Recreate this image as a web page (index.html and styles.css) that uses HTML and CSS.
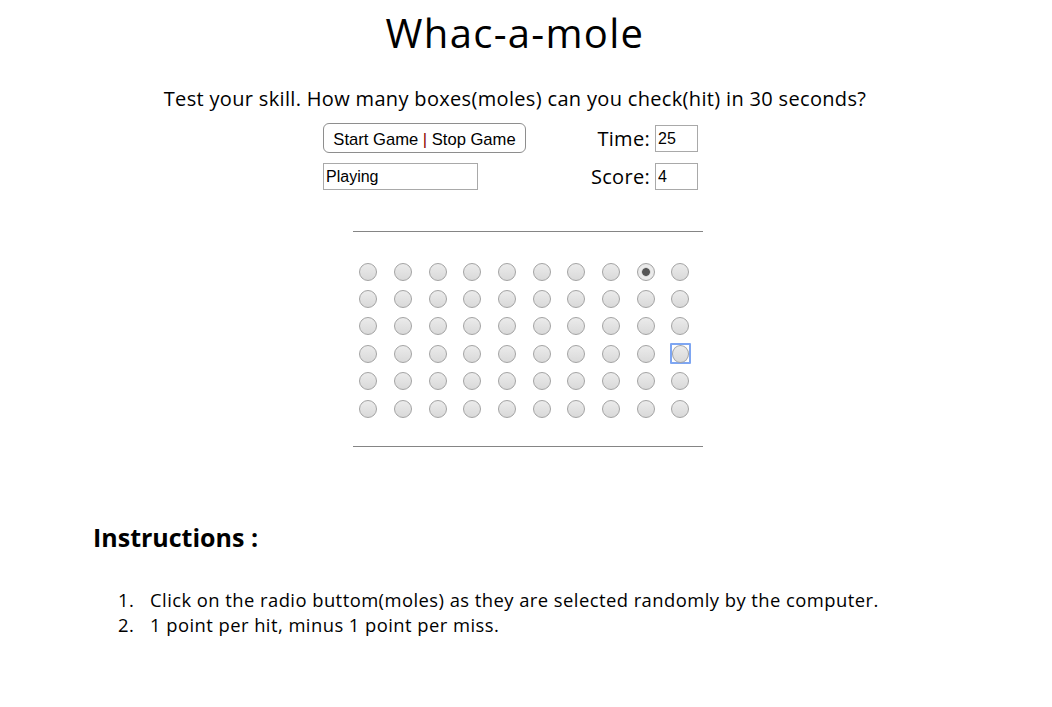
FILE: index.html
```html
<!DOCTYPE html>
<html>
<head>
<meta charset="utf-8">
<title>Whac-a-mole</title>
<link rel="stylesheet" href="styles.css">
</head>
<body>
<div class="page">
  <h1 class="title">Whac-a-mole</h1>
  <p class="lead">Test your skill. How many boxes(moles) can you check(hit) in 30 seconds?</p>
  <div class="controls">
    <button class="btn">Start Game <span class="sep">|</span> Stop Game</button>
    <div class="field time"><span class="label">Time:</span><input class="small" type="text" value="25"></div>
    <input class="status" type="text" value="Playing">
    <div class="field"><span class="label">Score:</span><input class="small" type="text" value="4"></div>
  </div>
  <div class="board">
    <div class="grid" id="grid"></div>
  </div>
  <h2 class="instr">Instructions :</h2>
  <ol class="steps">
    <li>Click on the radio buttom(moles) as they are selected randomly by the computer.</li>
    <li>1 point per hit, minus 1 point per miss.</li>
  </ol>
</div>
<script>
  var g = document.getElementById('grid');
  for (var r = 0; r < 6; r++) {
    for (var c = 0; c < 10; c++) {
      var cell = document.createElement('span');
      cell.className = 'cell';
      var i = document.createElement('input');
      i.type = 'radio';
      i.className = 'mole';
      if (r === 0 && c === 8) i.checked = true;
      if (r === 3 && c === 9) cell.className = 'cell focus';
      cell.appendChild(i);
      g.appendChild(cell);
    }
  }
</script>
</body>
</html>
```
FILE: styles.css
```css
html, body {
  margin: 0;
  padding: 0;
  background: #fff;
}
body {
  font-family: "Open Sans", "Noto Sans", sans-serif;
  color: #000;
}
.page {
  width: 1052px;
}
.title {
  margin: 0;
  padding-top: 6px;
  width: 1030px;
  text-align: center;
  font-weight: normal;
  font-size: 40px;
  line-height: 54px;
  letter-spacing: 1.3px;
}
.lead {
  margin: 26px 0 0;
  width: 1030px;
  text-align: center;
  font-size: 20px;
  line-height: 26px;
  letter-spacing: 0.33px;
}
.controls {
  margin: 11px 0 0 323px;
  width: 375px;
  display: grid;
  grid-template-columns: 1fr auto;
  row-gap: 10px;
  align-items: center;
}
.btn {
  justify-self: start;
  height: 30px;
  width: 203px;
  padding: 3px 0 0;
  border: 1px solid #8e8e8e;
  border-radius: 6px;
  background: #fff;
  font-family: "Liberation Sans", Arial, sans-serif;
  font-size: 16.6px;
  color: #000;
}
.sep {
  color: #8b0000;
}
.field {
  justify-self: end;
  display: flex;
  align-items: center;
  gap: 5px;
}
.time {
  margin-top: 1px;
}
.label {
  font-size: 20px;
  letter-spacing: 0.3px;
}
.small, .status {
  box-sizing: border-box;
  height: 27px;
  border: 1px solid #a9a9a9;
  padding: 0 2px;
  font-family: "Liberation Sans", Arial, sans-serif;
  font-size: 16px;
  color: #000;
  background: #fff;
  outline: none;
}
.small {
  width: 43px;
}
.status {
  width: 155px;
}
.board {
  margin: 41px 0 0 353px;
  width: 350px;
  border-top: 1px solid #858585;
  border-bottom: 1px solid #858585;
  padding: 26px 0 24px;
}
.grid {
  margin-left: -2px;
  display: grid;
  grid-template-columns: repeat(10, 34.67px);
  grid-auto-rows: 27.4px;
  justify-items: center;
  align-items: center;
}
.cell {
  display: flex;
  width: 21px;
  height: 21px;
  align-items: center;
  justify-content: center;
  box-sizing: border-box;
}
.cell.focus {
  border: 2px solid #7ea6f2;
  border-radius: 1px;
}
.mole {
  -webkit-appearance: none;
  appearance: none;
  margin: 0;
  width: 18px;
  height: 18px;
  box-sizing: border-box;
  border-radius: 50%;
  border: 1px solid #a3a3a3;
  background: linear-gradient(#ebebeb, #d9d9d9);
}
.mole:checked {
  background: radial-gradient(circle, #555 0, #555 3.5px, #c9c9c9 4.2px, #ececec 5px, #e3e3e3 100%);
}
.instr {
  margin: 74px 0 0 93px;
  font-size: 25px;
  line-height: 32px;
  font-weight: bold;
}
.steps {
  margin: 34px 0 0 0;
  padding-left: 118px;
  list-style: none;
  counter-reset: step;
  font-size: 18.4px;
  line-height: 25px;
  letter-spacing: 0.45px;
}
.steps li {
  counter-increment: step;
  display: flex;
}
.steps li::before {
  content: counter(step) ".";
  width: 32px;
  flex: none;
}
```
